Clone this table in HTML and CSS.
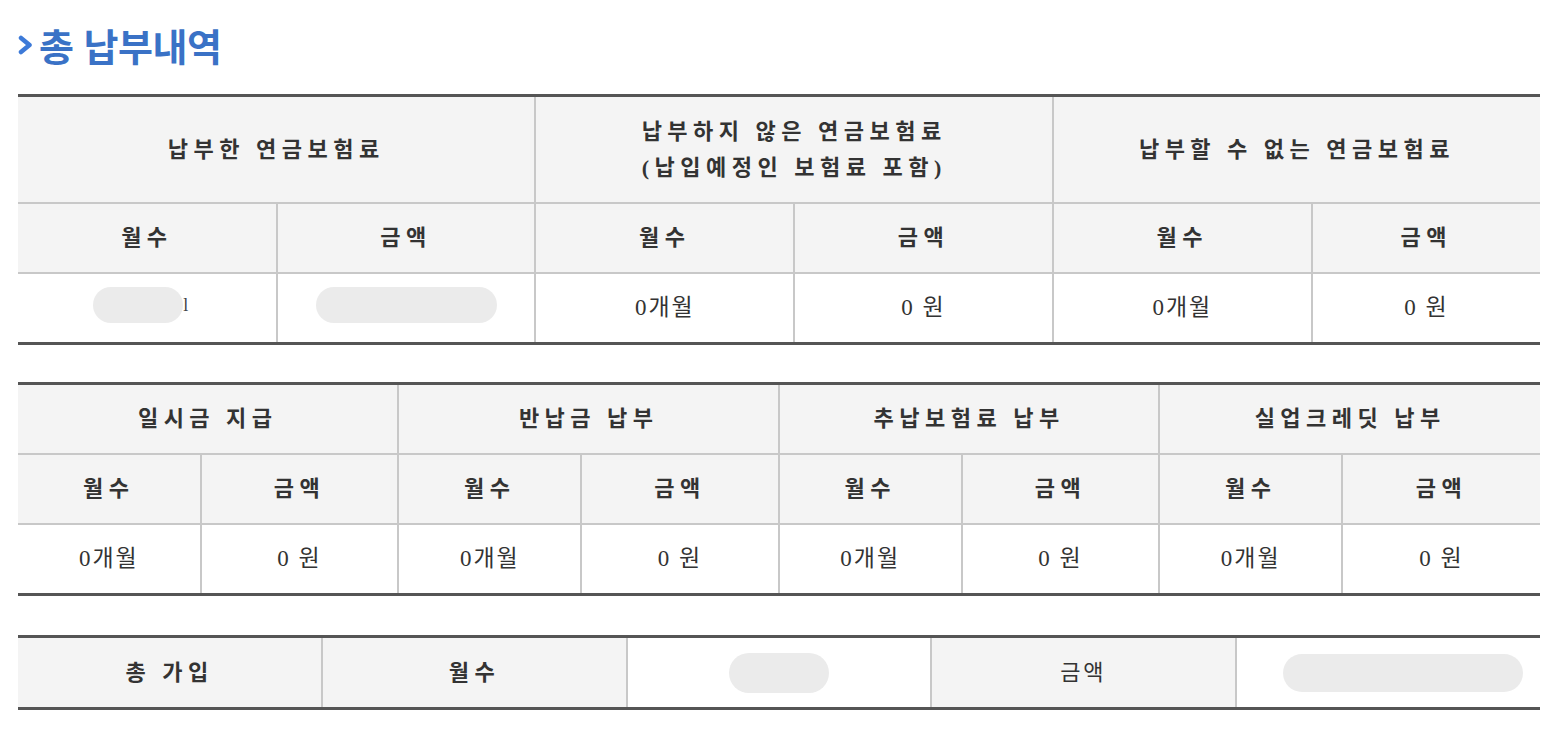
FILE: index.html
```html
<!DOCTYPE html>
<html lang="ko">
<head>
<meta charset="utf-8">
<title>총 납부내역</title>
<link rel="stylesheet" href="styles.css">
</head>
<body>
<div class="page">
  <h2 class="title">
    <svg class="chev" width="15" height="20" viewBox="0 0 15 20"><path d="M3 3 L11.5 10 L3 17" fill="none" stroke="#3d7ad8" stroke-width="4.5" stroke-linecap="round" stroke-linejoin="round"/></svg>
    <span>총 납부내역</span>
  </h2>

  <table class="tbl t1">
    <colgroup><col class="c17"><col class="c17"><col class="c17"><col class="c17"><col class="c17"><col class="c15"></colgroup>
    <tr class="h-tall">
      <th colspan="2">납부한 연금보험료</th>
      <th colspan="2">납부하지 않은 연금보험료<br>(납입예정인 보험료 포함)</th>
      <th colspan="2">납부할 수 없는 연금보험료</th>
    </tr>
    <tr>
      <th>월수</th><th>금액</th><th>월수</th><th>금액</th><th>월수</th><th>금액</th>
    </tr>
    <tr>
      <td><span class="blur b1"></span><span class="tail">l</span></td>
      <td><span class="blur b2"></span></td>
      <td>0개월</td><td>0 원</td><td>0개월</td><td>0 원</td>
    </tr>
  </table>

  <table class="tbl t2">
    <colgroup><col class="c12"><col class="c13"><col class="c12"><col class="c13"><col class="c12"><col class="c13"><col class="c12"><col class="c13"></colgroup>
    <tr>
      <th colspan="2">일시금 지급</th>
      <th colspan="2">반납금 납부</th>
      <th colspan="2">추납보험료 납부</th>
      <th colspan="2">실업크레딧 납부</th>
    </tr>
    <tr>
      <th>월수</th><th>금액</th><th>월수</th><th>금액</th><th>월수</th><th>금액</th><th>월수</th><th>금액</th>
    </tr>
    <tr>
      <td>0개월</td><td>0 원</td><td>0개월</td><td>0 원</td><td>0개월</td><td>0 원</td><td>0개월</td><td>0 원</td>
    </tr>
  </table>

  <table class="tbl t3">
    <colgroup><col class="c20"><col class="c20"><col class="c20"><col class="c20"><col class="c20"></colgroup>
    <tr>
      <th>총 가입</th>
      <th>월수</th>
      <td><span class="blur b3"></span></td>
      <th class="light">금액</th>
      <td><span class="blur b4"></span></td>
    </tr>
  </table>
</div>
</body>
</html>
```

FILE: styles.css
```css
html, body {
  margin: 0;
  padding: 0;
  background: #ffffff;
}

.page {
  padding: 16px 10px 0 18px;
  font-family: "Liberation Serif", "Noto Sans CJK KR", serif;
  color: #333333;
}

.title {
  margin: 0 0 22px 0;
  height: 56px;
  display: flex;
  align-items: center;
  gap: 6px;
  font-family: "Noto Sans CJK KR", sans-serif;
  font-size: 38px;
  font-weight: 700;
  letter-spacing: -0.5px;
  color: #3a72c6;
}

.chev {
  flex: none;
  margin-top: 2px;
}

.tbl {
  width: 100%;
  border-collapse: collapse;
  table-layout: fixed;
  border-top: 3px solid #555555;
  border-bottom: 3px solid #555555;
  margin-bottom: 37px;
}

.c17 { width: 17%; }
.c15 { width: 15%; }
.c12 { width: 12%; }
.c13 { width: 13%; }
.c20 { width: 20%; }

.tbl th,
.tbl td {
  border: 2px solid #c8c8c8;
  height: 68px;
  padding: 0;
  text-align: center;
  vertical-align: middle;
}

.tbl tr:first-child th,
.tbl tr:first-child td {
  border-top: none;
}

.tbl tr:last-child th,
.tbl tr:last-child td {
  border-bottom: none;
}

.tbl th:first-child,
.tbl td:first-child {
  border-left: none;
}

.tbl th:last-child,
.tbl td:last-child {
  border-right: none;
}

.tbl th {
  background: #f4f4f4;
  font-size: 22px;
  font-weight: 700;
  letter-spacing: 5.5px;
  color: #333333;
  line-height: 36px;
}

.tbl th.light {
  font-weight: 400;
  letter-spacing: 3px;
}

.tbl td {
  background: #ffffff;
  font-size: 23px;
  font-weight: 400;
  letter-spacing: 2px;
  color: #333333;
  height: 62px;
  padding-bottom: 6px;
}

.t1 .h-tall th {
  height: 105px;
}

.t2 {
  margin-bottom: 39px;
}

.t3 th,
.t3 td {
  height: 69px;
  padding-bottom: 0;
}

.blur {
  display: inline-block;
  vertical-align: middle;
  background: #ebebeb;
  border-radius: 18px;
}

.b1 { width: 90px; height: 36px; margin-left: -10px; }
.b2 { width: 181px; height: 36px; }
.b3 { width: 100px; height: 40px; border-radius: 22px; }
.b4 { width: 240px; height: 38px; border-radius: 20px; margin-left: 30px; }

.tail {
  display: inline-block;
  vertical-align: middle;
  color: #444444;
  font-size: 18px;
}

.t3 {
  margin-bottom: 0;
}
```
